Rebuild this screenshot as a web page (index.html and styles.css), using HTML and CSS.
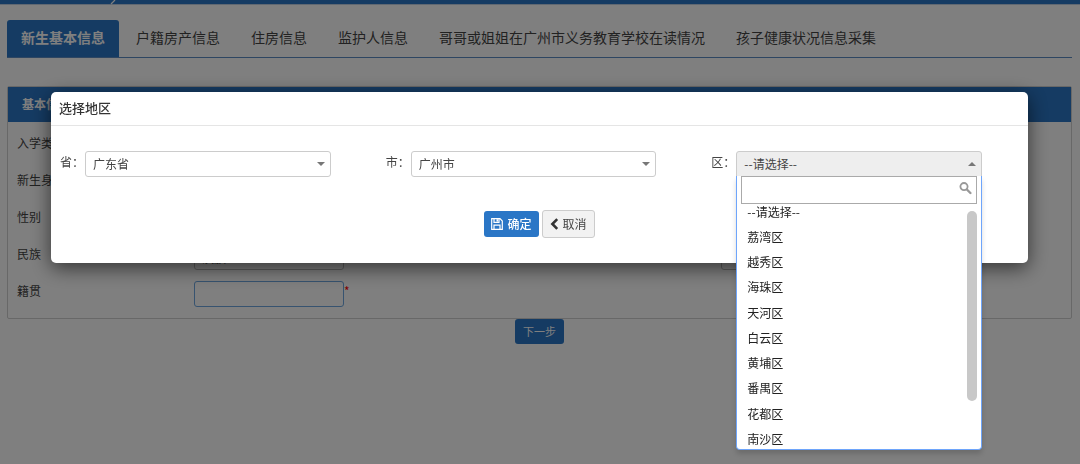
FILE: index.html
```html
<!DOCTYPE html>
<html lang="zh-CN">
<head>
<meta charset="utf-8">
<title>新生基本信息</title>
<link rel="stylesheet" href="styles.css">
</head>
<body>
<header class="topbar">
  <svg class="topbar-mark" width="6" height="5" viewBox="0 0 6 5" aria-hidden="true"><path d="M5 0 1 4" stroke="#fff" stroke-width="1.2"/></svg>
</header>
<main class="page">
  <nav class="tabs">
    <a class="tab tab-active" href="#basic">新生基本信息</a>
    <a class="tab" href="#house">户籍房产信息</a>
    <a class="tab" href="#live">住房信息</a>
    <a class="tab" href="#guardian">监护人信息</a>
    <a class="tab" href="#sibling">哥哥或姐姐在广州市义务教育学校在读情况</a>
    <a class="tab" href="#health">孩子健康状况信息采集</a>
  </nav>
  <section class="panel" id="basic">
    <h2 class="panel-head">基本信息</h2>
    <div class="panel-body">
      <div class="row"><span class="row-label">入学类别</span></div>
      <div class="row"><span class="row-label">新生身份</span></div>
      <div class="row"><span class="row-label">性别</span></div>
      <div class="row">
        <label class="row-label" for="nation">民族</label>
        <div class="cell"><select class="box" id="nation"><option>汉族</option></select></div>
        <span></span>
        <div class="cell"><select class="box" aria-label="选项"><option></option></select></div>
      </div>
      <div class="row">
        <label class="row-label" for="origin">籍贯</label>
        <div class="cell"><input class="box box-focus" id="origin" type="text"><span class="required">*</span></div>
      </div>
    </div>
  </section>
  <div class="page-actions"><button class="next" type="button">下一步</button></div>
</main>

<div class="overlay">
  <div class="dialog" role="dialog" aria-modal="true" aria-labelledby="dialog-title">
    <h2 class="dialog-title" id="dialog-title">选择地区</h2>
    <div class="dialog-body">
      <div class="fields">
        <div class="field">
          <label class="field-label" for="province">省：</label>
          <div class="picker"><select class="choice" id="province"><option>广东省</option></select></div>
        </div>
        <div class="field">
          <label class="field-label" for="city">市：</label>
          <div class="picker"><select class="choice" id="city"><option>广州市</option></select></div>
        </div>
        <div class="field">
          <label class="field-label" for="district">区：</label>
          <div class="picker picker-open">
            <button class="choice choice-open" id="district" type="button" aria-haspopup="listbox" aria-expanded="true">--请选择--</button>
            <div class="menu">
              <div class="search">
                <input class="search-input" type="text" aria-label="搜索">
                <svg class="search-icon" width="13" height="13" viewBox="0 0 13 13" aria-hidden="true"><circle cx="5" cy="4.6" r="3.6" fill="none" stroke="#999" stroke-width="1.8"/><path d="M7.9 7.5 11.4 11" stroke="#999" stroke-width="2.4" stroke-linecap="round"/></svg>
              </div>
              <ul class="options" role="listbox" aria-label="区">
                <li role="option" aria-selected="true">--请选择--</li>
                <li role="option">荔湾区</li>
                <li role="option">越秀区</li>
                <li role="option">海珠区</li>
                <li role="option">天河区</li>
                <li role="option">白云区</li>
                <li role="option">黄埔区</li>
                <li role="option">番禺区</li>
                <li role="option">花都区</li>
                <li role="option">南沙区</li>
              </ul>
              <div class="scroll-thumb"></div>
            </div>
          </div>
        </div>
      </div>
      <div class="dialog-actions">
        <button class="btn btn-primary" type="button">
          <svg width="12" height="12" viewBox="0 0 12 12" fill="none" stroke="#fff" stroke-width="1.2" aria-hidden="true"><path d="M.7.7H9L11.3 3v8.3H.7z"/><path d="M3 11V7.2h6V11"/><path d="M3 .7v3.6h5V.7"/><path d="M6.3 1.2v2.4" stroke-width="1.6"/></svg>
          确定
        </button>
        <button class="btn btn-plain" type="button">
          <svg width="9" height="12" viewBox="0 0 9 12" fill="none" stroke="#333" stroke-width="2.6" aria-hidden="true"><path d="M7.2 1.2 2.4 6l4.8 4.8"/></svg>
          取消
        </button>
      </div>
    </div>
  </div>
</div>
</body>
</html>
```

FILE: styles.css
```css
* { box-sizing: border-box; }
body {
  margin: 0;
  background: #fff;
  color: #444;
  font: 12px/20px "Noto Sans CJK SC", sans-serif;
}
button, input, select { font: inherit; color: inherit; margin: 0; }
h2, ul { margin: 0; padding: 0; }

.topbar {
  height: 5px;
  background: #2a76c6;
  border-bottom: 1px solid #c0d0e4;
  padding-left: 110px;
}
.topbar-mark { display: block; }

.page { padding: 15px 8px 0 7px; }
.tabs {
  display: flex;
  gap: 3px;
  border-bottom: 1px solid #5c8cc4;
}
.tab {
  padding: 0 14px 2px;
  font-size: 14px;
  line-height: 35px;
  color: #444;
  text-decoration: none;
  white-space: nowrap;
}
.tab-active {
  background: #2a76c6;
  border-radius: 3px 3px 0 0;
  color: #fff;
  font-weight: bold;
}

.panel {
  margin-top: 28px;
  border: 1px solid #d0d0d0;
  border-radius: 2px;
}
.panel-head {
  padding: 0 14px 2px;
  background: #2a76c6;
  color: #fff;
  font-size: 12px;
  line-height: 33px;
}
.panel-body { padding: 11px 0 0 9px; }
.row {
  display: grid;
  grid-template-columns: 177px 1fr 177px 1fr;
  align-items: start;
  height: 37px;
}
.cell { display: flex; }
.box {
  width: 150px;
  height: 26px;
  padding: 2px 7px 0;
  background: #fff;
  border: 1px solid #bbb;
  border-radius: 3px;
  appearance: none;
}
.box-focus { border-color: #6ea6e0; }
.required { color: #f00; }
.page-actions { text-align: center; }
.next {
  display: block;
  height: 25px;
  margin: 0 auto;
  padding: 0 8px 2px;
  background: #2a76c6;
  border: 0;
  border-radius: 3px;
  color: #fff;
  font-size: 11px;
}

.overlay {
  position: fixed;
  inset: 0;
  padding: 92px 52px 0 51px;
  background: rgba(0, 0, 0, .5);
}
.dialog {
  background: #fff;
  border-radius: 5px;
  box-shadow: 0 5px 20px rgba(0, 0, 0, .6);
}
.dialog-title {
  padding: 0 8px 2px;
  border-bottom: 1px solid #e5e5e5;
  color: #333;
  font-size: 13px;
  font-weight: 500;
  line-height: 31px;
}
.dialog-body { padding: 25px 0; }
.fields {
  display: grid;
  grid-template-columns: repeat(3, 1fr);
}
.field {
  display: flex;
  padding: 0 46px 0 9px;
}
.field-label {
  width: 25px;
  line-height: 22px;
  white-space: nowrap;
}
.picker {
  position: relative;
  flex: 1;
}
.picker::after {
  content: "";
  position: absolute;
  top: 11px;
  right: 6px;
  border: 4px solid transparent;
  border-top-color: #777;
  border-bottom-width: 0;
}
.picker-open::after {
  border-top-width: 0;
  border-bottom: 4px solid #777;
}
.choice {
  display: block;
  width: 100%;
  height: 26px;
  padding: 0 7px;
  background: #fff;
  border: 1px solid #ccc;
  border-radius: 3px;
  appearance: none;
  text-align: left;
}
.choice-open {
  background: #eee;
  border-radius: 3px 3px 0 0;
}
.menu {
  position: absolute;
  top: 25px;
  left: 0;
  right: 0;
  height: 274px;
  padding: 0 4px;
  overflow: hidden;
  background: #fff;
  border: 1px solid #6ea5fb;
  border-top: 0;
  border-radius: 0 0 4px 4px;
  box-shadow: 0 4px 5px rgba(0, 0, 0, .15);
}
.search { position: relative; }
.search-input {
  display: block;
  width: 100%;
  height: 28px;
  padding: 0 24px 0 6px;
  background: #fff;
  border: 1px solid #aaa;
}
.search-icon {
  position: absolute;
  top: 6px;
  right: 5px;
}
.options {
  display: grid;
  grid-template-rows: 20px;
  grid-auto-rows: 1fr;
  height: 247px;
  padding-left: 6px;
  color: #222;
  list-style: none;
}
.options li {
  line-height: 25px;
}
.options li:first-child { line-height: 16px; }
.scroll-thumb {
  position: absolute;
  top: 35px;
  right: 4px;
  width: 10px;
  height: 190px;
  background: #c8c8c8;
  border-radius: 5px;
}

.dialog-actions {
  display: flex;
  justify-content: center;
  align-items: center;
  gap: 3px;
  padding-top: 33px;
}
.btn {
  display: flex;
  align-items: center;
  gap: 4px;
  border-radius: 3px;
}
.btn-primary {
  height: 26px;
  padding: 0 7px;
  background: #2a76c6;
  border: 0;
  color: #fff;
  font-weight: 500;
}
.btn-plain {
  height: 28px;
  padding: 0 7px;
  background: #f2f2f2;
  border: 1px solid #ccc;
}
```
